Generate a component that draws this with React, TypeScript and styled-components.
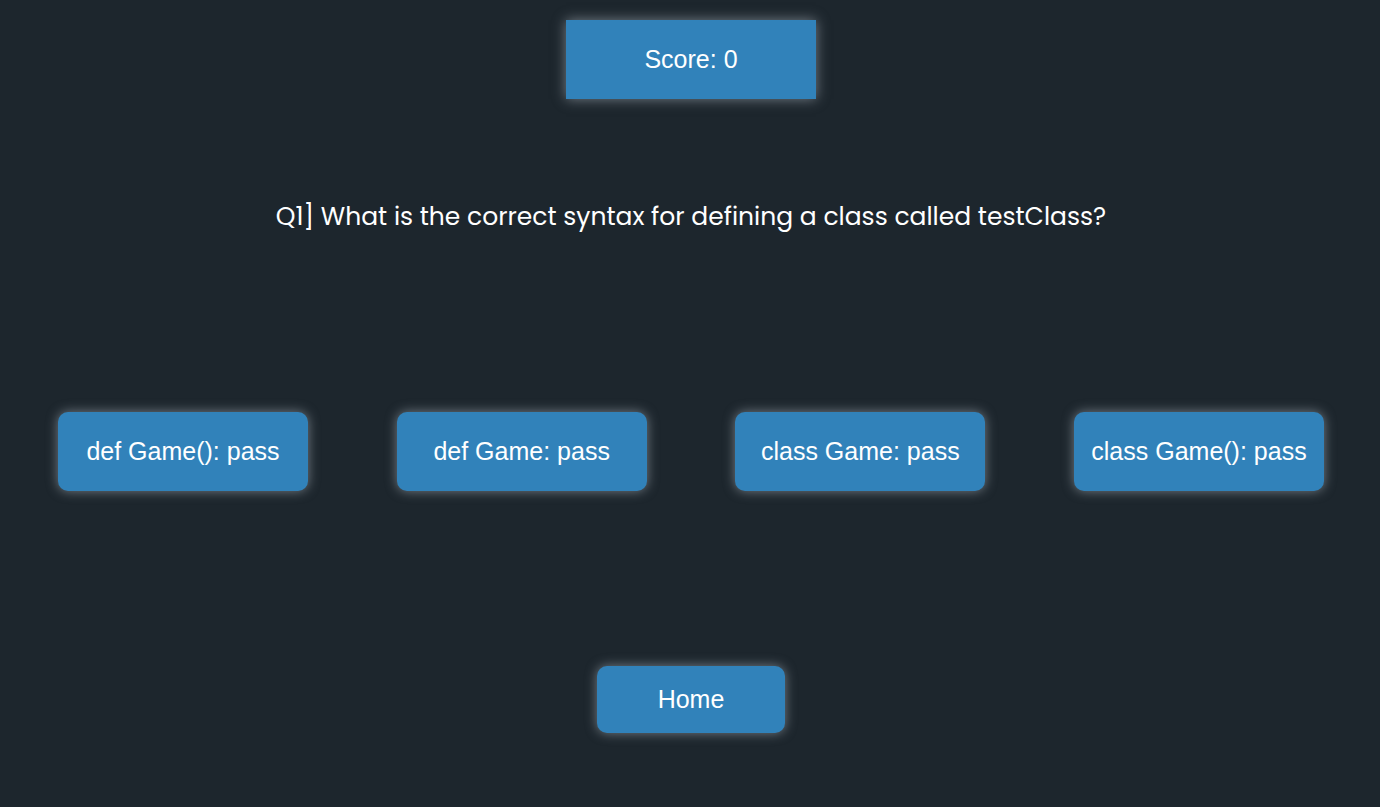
import React from "react";
import styled, { createGlobalStyle } from "styled-components";

const Global = createGlobalStyle`
  html, body { margin: 0; padding: 0; background: #1d262d; }
  body { font-family: "Liberation Sans", Arial, sans-serif; }
`;

const Page = styled.div`
  width: 1380px;
  height: 807px;
  background: #1d262d;
  display: flex;
  flex-direction: column;
  align-items: center;
  padding: 20px 0 0 2px;
  box-sizing: border-box;
`;

const ScoreBox = styled.div`
  width: 250px;
  height: 79px;
  background: #3182ba;
  color: #fff;
  font-size: 25px;
  display: flex;
  align-items: center;
  justify-content: center;
  box-shadow: 0 0 12px rgba(175, 185, 195, 0.6);
`;

const Question = styled.h2`
  margin: 100px 0 0;
  color: #fff;
  font-family: "Poppins", "Open Sans", sans-serif;
  font-weight: 400;
  font-size: 25px;
  line-height: 36px;
`;

const Options = styled.div`
  margin-top: 177px;
  width: 100%;
  box-sizing: border-box;
  padding: 0 56px 0 56px;
  display: flex;
  justify-content: space-between;
`;

const Button = styled.button<{ $w?: number; $h?: number }>`
  width: ${(p) => p.$w ?? 250}px;
  height: ${(p) => p.$h ?? 79}px;
  background: #3182ba;
  color: #fff;
  border: none;
  border-radius: 10px;
  font-family: "Liberation Sans", Arial, sans-serif;
  font-size: 25px;
  box-shadow: 0 0 12px rgba(175, 185, 195, 0.6);
  cursor: pointer;
  padding: 0;
`;

const HomeButton = styled(Button)`
  margin-top: 175px;
`;

const answers = ["def Game(): pass", "def Game: pass", "class Game: pass", "class Game(): pass"];

export default function App() {
  return (
    <>
      <Global />
      <Page>
        <ScoreBox>Score: 0</ScoreBox>
        <Question>Q1] What is the correct syntax for defining a class called testClass?</Question>
        <Options>
          {answers.map((a) => (
            <Button key={a}>{a}</Button>
          ))}
        </Options>
        <HomeButton $w={188} $h={67}>Home</HomeButton>
      </Page>
    </>
  );
}
